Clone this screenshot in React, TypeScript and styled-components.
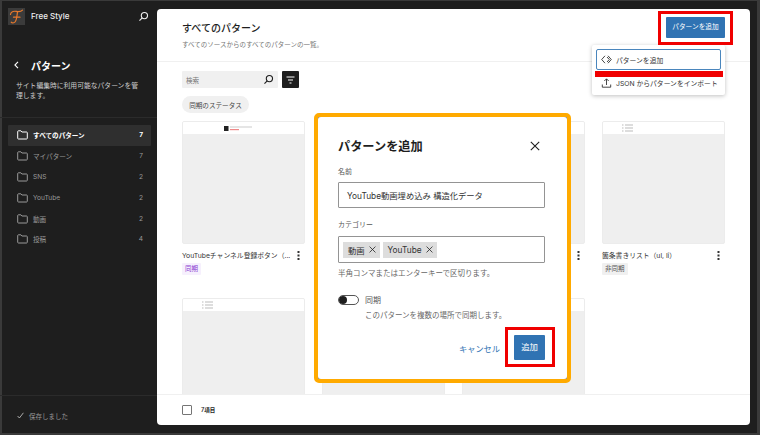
import styled, { createGlobalStyle } from "styled-components";

const FONT = `"Inter", "Noto Sans CJK JP", "Liberation Sans", sans-serif`;

const GlobalStyle = createGlobalStyle`
    html, body {
        margin: 0;
        padding: 0;
        background: #1e1e1e;
    }
    * {
        box-sizing: border-box;
    }
`;

const Frame = styled.div`
    position: relative;
    width: 760px;
    height: 435px;
    display: flex;
    overflow: hidden;
    background: #1e1e1e;
    font-family: ${FONT};
    color: #1e1e1e;
    box-shadow: inset 2px 0 0 #3a3a3a, inset 0 -2px 0 #3a3a3a, inset -3px 0 0 #3a3a3a, inset 0 1px 0 #3a3a3a;
`;

const Sidebar = styled.aside`
    width: 157px;
    flex: none;
    display: flex;
    flex-direction: column;
    color: #fff;
`;

const SiteBar = styled.div`
    height: 34px;
    margin-top: 8px;
    padding: 0 8px;
    display: flex;
    align-items: flex-start;
    gap: 6px;

    svg {
        margin-top: 3px;
    }
`;

const Logo = styled.div`
    width: 17px;
    height: 17px;
    background: #3b3b3b;

    svg {
        display: block;
        margin: 0;
    }
`;

const SiteName = styled.div`
    flex: 1;
    font-size: 8px;
    font-weight: 500;
    line-height: 17px;
    color: #eee;
`;

const SideHead = styled.div`
    margin-top: 14px;
    padding: 0 14px;
    height: 18px;
    display: flex;
    align-items: center;
    gap: 12px;
    font-size: 10px;
    font-weight: 700;
`;

const SideDesc = styled.p`
    margin: 7px 16px 0;
    height: 36px;
    font-size: 6.8px;
    line-height: 10px;
    color: #ccc;
`;

const NavList = styled.ul`
    list-style: none;
    margin: 0;
    padding: 7px 6px 0 8px;
    border-top: 1px solid #2b2b2b;
    flex: 1;
`;

const NavItem = styled.li<{ $active?: boolean }>`
    height: 20.8px;
    padding: 0 8px 0 9px;
    display: flex;
    align-items: center;
    gap: 5px;
    font-size: 6.6px;
    font-weight: ${props => (props.$active ? 700 : 400)};
    color: ${props => (props.$active ? "#fff" : "#999")};
    background: ${props => (props.$active ? "#2f2f2f" : "transparent")};
    border-radius: 1px;

    span:nth-child(2) {
        flex: 1;
    }
`;

const SideFoot = styled.div`
    height: 40px;
    flex: none;
    border-top: 1px solid #2b2b2b;
    padding: 0 17px;
    display: flex;
    align-items: center;
    gap: 5px;
    font-size: 6.5px;
    color: #999;
`;

const Main = styled.main`
    width: 593px;
    margin: 9px 0 10px;
    border-radius: 4px;
    background: #fff;
    display: flex;
    flex-direction: column;
    overflow: hidden;
`;

const PageHeader = styled.header`
    height: 53px;
    flex: none;
    padding: 0 25px;
    border-bottom: 1px solid #f0f0f0;
    display: flex;
    justify-content: space-between;
    align-items: flex-start;
`;

const PageTitle = styled.h1`
    margin: 12px 0 0;
    font-size: 10px;
    line-height: 14px;
    font-weight: 500;
`;

const PageDesc = styled.p`
    margin: 5px 0 0;
    font-size: 6.5px;
    line-height: 10px;
    color: #757575;
`;

const PrimaryButton = styled.button<{ $wide?: boolean }>`
    width: ${props => (props.$wide ? "59px" : "31px")};
    height: ${props => (props.$wide ? "21px" : "25px")};
    margin: 0;
    padding: 0;
    border: none;
    border-radius: 1px;
    background: #3073b3;
    color: #fff;
    font-family: inherit;
    font-size: ${props => (props.$wide ? "6.7px" : "8.4px")};
    line-height: 1;
`;

const HeaderAction = styled(PrimaryButton)`
    margin-top: 8px;
`;

const Filters = styled.div`
    flex: none;
    padding: 9px 25px 0;
`;

const SearchRow = styled.div`
    display: flex;
    gap: 4px;
`;

const SearchBox = styled.div`
    width: 96px;
    height: 17px;
    padding: 0 4px;
    background: #f0f0f0;
    border-radius: 1px;
    display: flex;
    align-items: center;
    justify-content: space-between;
    font-size: 6.6px;
    color: #757575;
`;

const FilterButton = styled.div`
    width: 17px;
    height: 17px;
    background: #1e1e1e;
    border-radius: 1px;
    display: flex;
    align-items: center;
    justify-content: center;
`;

const StatusChip = styled.div`
    width: 67px;
    height: 17px;
    margin-top: 8px;
    border-radius: 9px;
    background: #f0f0f0;
    font-size: 6.6px;
    color: #444;
    display: flex;
    align-items: center;
    justify-content: center;
`;

const CardGrid = styled.div`
    flex: 1;
    min-height: 0;
    overflow: hidden;
    padding: 8px 25px 0;
    display: grid;
    grid-template-columns: repeat(4, 123px);
    grid-auto-rows: 160px;
    column-gap: 17px;
    row-gap: 17px;
`;

const Card = styled.article`
    min-width: 0;
`;

const Preview = styled.div`
    height: 123px;
    border: 1px solid #ececec;
    border-radius: 2px;
    background: #efefef;
    overflow: hidden;
`;

const PreviewTop = styled.div<{ $inset: number }>`
    height: 12px;
    background: #fff;
    display: flex;
    padding-left: ${props => props.$inset}px;
    align-items: center;
`;

const CardName = styled.div`
    margin-top: 5px;
    height: 12px;
    padding-right: 5px;
    display: flex;
    align-items: center;
    justify-content: space-between;
    font-size: 6.8px;
    color: #333;

    span {
        white-space: nowrap;
    }
`;

const Badge = styled.span<{ $synced?: boolean }>`
    display: block;
    width: fit-content;
    margin-top: 2px;
    padding: 0 3px;
    height: 12px;
    line-height: 12px;
    font-size: 6.5px;
    border-radius: 1px;
    color: ${props => (props.$synced ? "#8a3ad0" : "#555")};
    background: ${props => (props.$synced ? "#f6f0fd" : "#f0f0f0")};
`;

const PageFooter = styled.footer`
    height: 31px;
    flex: none;
    border-top: 1px solid #f0f0f0;
    padding: 0 25px;
    display: flex;
    align-items: center;
    gap: 9px;
    font-size: 5.5px;
    font-weight: 600;
`;

const CheckBox = styled.div`
    width: 10px;
    height: 10px;
    border: 1px solid #757575;
    border-radius: 1px;
`;

const Menu = styled.div`
    position: absolute;
    left: 592px;
    top: 45px;
    width: 133px;
    height: 50px;
    padding: 4px;
    background: #fff;
    border-radius: 2px;
    box-shadow: 0 1px 4px rgba(0, 0, 0, 0.25);
    font-size: 6.8px;
    color: #333;
`;

const MenuItem = styled.div<{ $focused?: boolean }>`
    height: 21px;
    padding: 0 4px;
    margin-bottom: 2px;
    display: flex;
    align-items: center;
    gap: 4px;
    white-space: nowrap;
    border-radius: 2px;
    border: 1px solid ${props => (props.$focused ? "#4a86bd" : "transparent")};

    svg {
        flex: none;
    }
`;

const Highlight = styled.div<{ $x: number; $y: number; $w: number; $h: number }>`
    position: absolute;
    left: ${props => props.$x}px;
    top: ${props => props.$y}px;
    width: ${props => props.$w}px;
    height: ${props => props.$h}px;
    border: 3px solid #f00000;
    pointer-events: none;
`;

const Modal = styled.section`
    position: absolute;
    left: 314px;
    top: 113px;
    width: 257px;
    height: 270px;
    border: 4px solid #ffaa00;
    border-radius: 5px;
    background: #8a8a8a;
`;

const ModalBody = styled.div`
    height: 100%;
    border-radius: 3px;
    background: #fff;
    padding: 20px 22px 0 20px;
    display: flex;
    flex-direction: column;
`;

const ModalHead = styled.div`
    display: flex;
    align-items: center;
    justify-content: space-between;
    height: 18px;
    padding-right: 5px;

    h2 {
        margin: 0;
        font-size: 12.2px;
        font-weight: 700;
    }
`;

const FieldLabel = styled.label`
    display: block;
    margin-top: 12px;
    font-size: 7px;
    line-height: 10px;
    color: #555;
`;

const FieldBox = styled.div<{ $tall?: boolean }>`
    margin-top: ${props => (props.$tall ? "6px" : "5px")};
    height: ${props => (props.$tall ? "27px" : "26px")};
    flex: none;
    border: 1px solid #949494;
    border-radius: 1px;
    display: flex;
    align-items: center;
    gap: 3px;
    padding: 0 ${props => (props.$tall ? "4px" : "8px")};
    font-size: 8.3px;
    color: #333;
`;

const TokenChip = styled.span`
    height: 16px;
    padding: 0 4px 0 5px;
    background: #ddd;
    display: flex;
    align-items: center;
    gap: 4px;
    font-size: 8.3px;
`;

const Help = styled.p<{ $indent?: boolean }>`
    margin: 6px 0 0 ${props => (props.$indent ? "27px" : "0")};
    font-size: 7.5px;
    line-height: 10px;
    color: #666;
    white-space: nowrap;
`;

const ToggleRow = styled.div`
    margin-top: 15px;
    display: flex;
    align-items: center;
    gap: 6px;
    font-size: 8px;
    color: #555;
`;

const Toggle = styled.div`
    width: 21px;
    height: 10px;
    border: 1px solid #555;
    border-radius: 5px;
    display: flex;
    align-items: center;

    &::before {
        content: "";
        width: 8px;
        height: 8px;
        border-radius: 50%;
        background: #1e1e1e;
    }
`;

const ModalActions = styled.div`
    margin-top: 14px;
    display: flex;
    justify-content: flex-end;
    align-items: center;
    gap: 14px;
`;

const CancelLink = styled.span`
    font-size: 8.2px;
    color: #3073b3;
`;

const SearchIcon = ({ color = "#1e1e1e", size = 11 }: { color?: string; size?: number }) => (
    <svg width={size} height={size} viewBox="0 0 12 12" fill="none" stroke={color} strokeWidth="1.2">
        <circle cx="7" cy="5" r="3.4" />
        <path d="M4.6 7.5 1.6 10.6" />
    </svg>
);

const FolderIcon = ({ color }: { color: string }) => (
    <svg width="11" height="10" viewBox="0 0 11 10" fill="none" stroke={color} strokeWidth="1">
        <path d="M.7 1.5c0-.4.3-.7.7-.7h2.5l1 1.2h4.7c.4 0 .7.3.7.7v5.6c0 .4-.3.7-.7.7H1.4c-.4 0-.7-.3-.7-.7z" />
    </svg>
);

const CloseIcon = ({ size = 7, width = 1.1 }: { size?: number; width?: number }) => (
    <svg width={size} height={size} viewBox="0 0 10 10" stroke="#1e1e1e" strokeWidth={width} fill="none">
        <path d="M.8.8l8.4 8.4M9.2.8.8 9.2" />
    </svg>
);

const MoreIcon = () => (
    <svg width="3" height="9" viewBox="0 0 3 9" fill="#333">
        <rect x="0.5" y="0" width="2" height="2" />
        <rect x="0.5" y="3.5" width="2" height="2" />
        <rect x="0.5" y="7" width="2" height="2" />
    </svg>
);

const SyncThumb = () => (
    <svg width="30" height="7" viewBox="0 0 30 7">
        <rect x="0" y="1" width="4.5" height="5" fill="#222" />
        <rect x="6" y="1.5" width="22" height="1" fill="#ccc" />
        <rect x="6" y="4" width="9" height="1.2" fill="#e88" />
    </svg>
);

const ListThumb = () => (
    <svg width="11" height="8" viewBox="0 0 11 8" fill="#bbb">
        <rect x="0" y="0.5" width="1.5" height="1" />
        <rect x="3" y="0.5" width="8" height="1" />
        <rect x="0" y="3.5" width="1.5" height="1" />
        <rect x="3" y="3.5" width="8" height="1" />
        <rect x="0" y="6.5" width="1.5" height="1" />
        <rect x="3" y="6.5" width="8" height="1" />
    </svg>
);

const navItems = [
    { label: "すべてのパターン", count: 7 },
    { label: "マイパターン", count: 7 },
    { label: "SNS", count: 2 },
    { label: "YouTube", count: 2 },
    { label: "動画", count: 2 },
    { label: "投稿", count: 4 },
];

// only the parts the dialog and the footer leave visible carry text
const cards = [
    { name: "YouTubeチャンネル登録ボタン（...", badge: "同期", synced: true },
    { name: "", more: true },
    { name: "", more: true },
    { name: "箇条書きリスト（ul, li）", badge: "非同期" },
    { name: "" },
    { name: "" },
    { name: "" },
];

function App() {
    return (
        <Frame>
            <GlobalStyle />
            <Sidebar>
                <SiteBar>
                    <Logo>
                        <svg width="17" height="17" viewBox="0 0 17 17" fill="none" stroke="#e8792c" strokeWidth="1.2" strokeLinecap="round">
                            <path d="M2.5 6.5C3 3.5 6 3 8.5 3.4s4.500.3 6-1.200" />
                            <path d="M9.500 3.500C9 7.500 9 11.500 7 14c-1 1.200-3 1.300-3.800.2" />
                            <path d="M5.500 9.200h6.500" />
                        </svg>
                    </Logo>
                    <SiteName>Free Style</SiteName>
                    <SearchIcon color="#eee" />
                </SiteBar>
                <SideHead>
                    <svg width="5" height="8" viewBox="0 0 5 8" fill="none" stroke="#fff" strokeWidth="1.1">
                        <path d="M4 .8.9 4 4 7.2" />
                    </svg>
                    パターン
                </SideHead>
                <SideDesc>サイト編集時に利用可能なパターンを管理します。</SideDesc>
                <NavList>
                    {navItems.map((item, index) => (
                        <NavItem key={item.label} $active={index === 0}>
                            <FolderIcon color={index === 0 ? "#fff" : "#999"} />
                            <span>{item.label}</span>
                            <span>{item.count}</span>
                        </NavItem>
                    ))}
                </NavList>
                <SideFoot>
                    <svg width="7" height="7" viewBox="0 0 7 7" fill="none" stroke="#ccc" strokeWidth="0.8">
                        <path d="M.6 4 2.4 6 6.4.8" />
                    </svg>
                    保存しました
                </SideFoot>
            </Sidebar>
            <Main>
                <PageHeader>
                    <div>
                        <PageTitle>すべてのパターン</PageTitle>
                        <PageDesc>すべてのソースからのすべてのパターンの一覧。</PageDesc>
                    </div>
                    <HeaderAction $wide>パターンを追加</HeaderAction>
                </PageHeader>
                <Filters>
                    <SearchRow>
                        <SearchBox>
                            検索
                            <SearchIcon />
                        </SearchBox>
                        <FilterButton>
                            <svg width="9" height="8" viewBox="0 0 9 8" stroke="#fff" strokeWidth="1">
                                <path d="M.5 1h8M2 4h5M3.5 7h2" />
                            </svg>
                        </FilterButton>
                    </SearchRow>
                    <StatusChip>同期のステータス</StatusChip>
                </Filters>
                <CardGrid>
                    {cards.map((card, index) => (
                        <Card key={index}>
                            <Preview>
                                <PreviewTop $inset={card.synced ? 41 : 19}>
                                    {card.synced ? <SyncThumb /> : <ListThumb />}
                                </PreviewTop>
                            </Preview>
                            {(card.name || card.more) && (
                                <CardName>
                                    <span>{card.name}</span>
                                    <MoreIcon />
                                </CardName>
                            )}
                            {card.badge && <Badge $synced={card.synced}>{card.badge}</Badge>}
                        </Card>
                    ))}
                </CardGrid>
                <PageFooter>
                    <CheckBox />
                    7項目
                </PageFooter>
            </Main>

            <Menu>
                <MenuItem $focused>
                    <svg width="11" height="9" viewBox="0 0 11 9" fill="none" stroke="#333" strokeWidth="0.9">
                        <path d="M4 .8.7 4.5 4 8.2M6 2 8.300 4.500 6 7M7 .8l3.300 3.700L7 8.200" />
                    </svg>
                    パターンを追加
                </MenuItem>
                <MenuItem>
                    <svg width="11" height="10" viewBox="0 0 11 10" fill="none" stroke="#333" strokeWidth="0.9">
                        <path d="M5.500 7V1M3.300 3 5.500.8 7.700 3M1.300 6.500v2.700h8.400V6.500" />
                    </svg>
                    JSON からパターンをインポート
                </MenuItem>
            </Menu>
            <Highlight $x={595} $y={71} $w={128} $h={3} />
            <Highlight $x={658} $y={11} $w={75} $h={34} />

            <Modal>
                <ModalBody>
                    <ModalHead>
                        <h2>パターンを追加</h2>
                        <CloseIcon size={10} width={1.1} />
                    </ModalHead>
                    <FieldLabel>名前</FieldLabel>
                    <FieldBox>YouTube動画埋め込み 構造化データ</FieldBox>
                    <FieldLabel>カテゴリー</FieldLabel>
                    <FieldBox $tall>
                        <TokenChip>
                            動画 <CloseIcon />
                        </TokenChip>
                        <TokenChip>
                            YouTube <CloseIcon />
                        </TokenChip>
                    </FieldBox>
                    <Help>半角コンマまたはエンターキーで区切ります。</Help>
                    <ToggleRow>
                        <Toggle />
                        同期
                    </ToggleRow>
                    <Help $indent>このパターンを複数の場所で同期します。</Help>
                    <ModalActions>
                        <CancelLink>キャンセル</CancelLink>
                        <PrimaryButton>追加</PrimaryButton>
                    </ModalActions>
                </ModalBody>
            </Modal>
            <Highlight $x={505} $y={327} $w={50} $h={40} />
        </Frame>
    );
}

export default App;
